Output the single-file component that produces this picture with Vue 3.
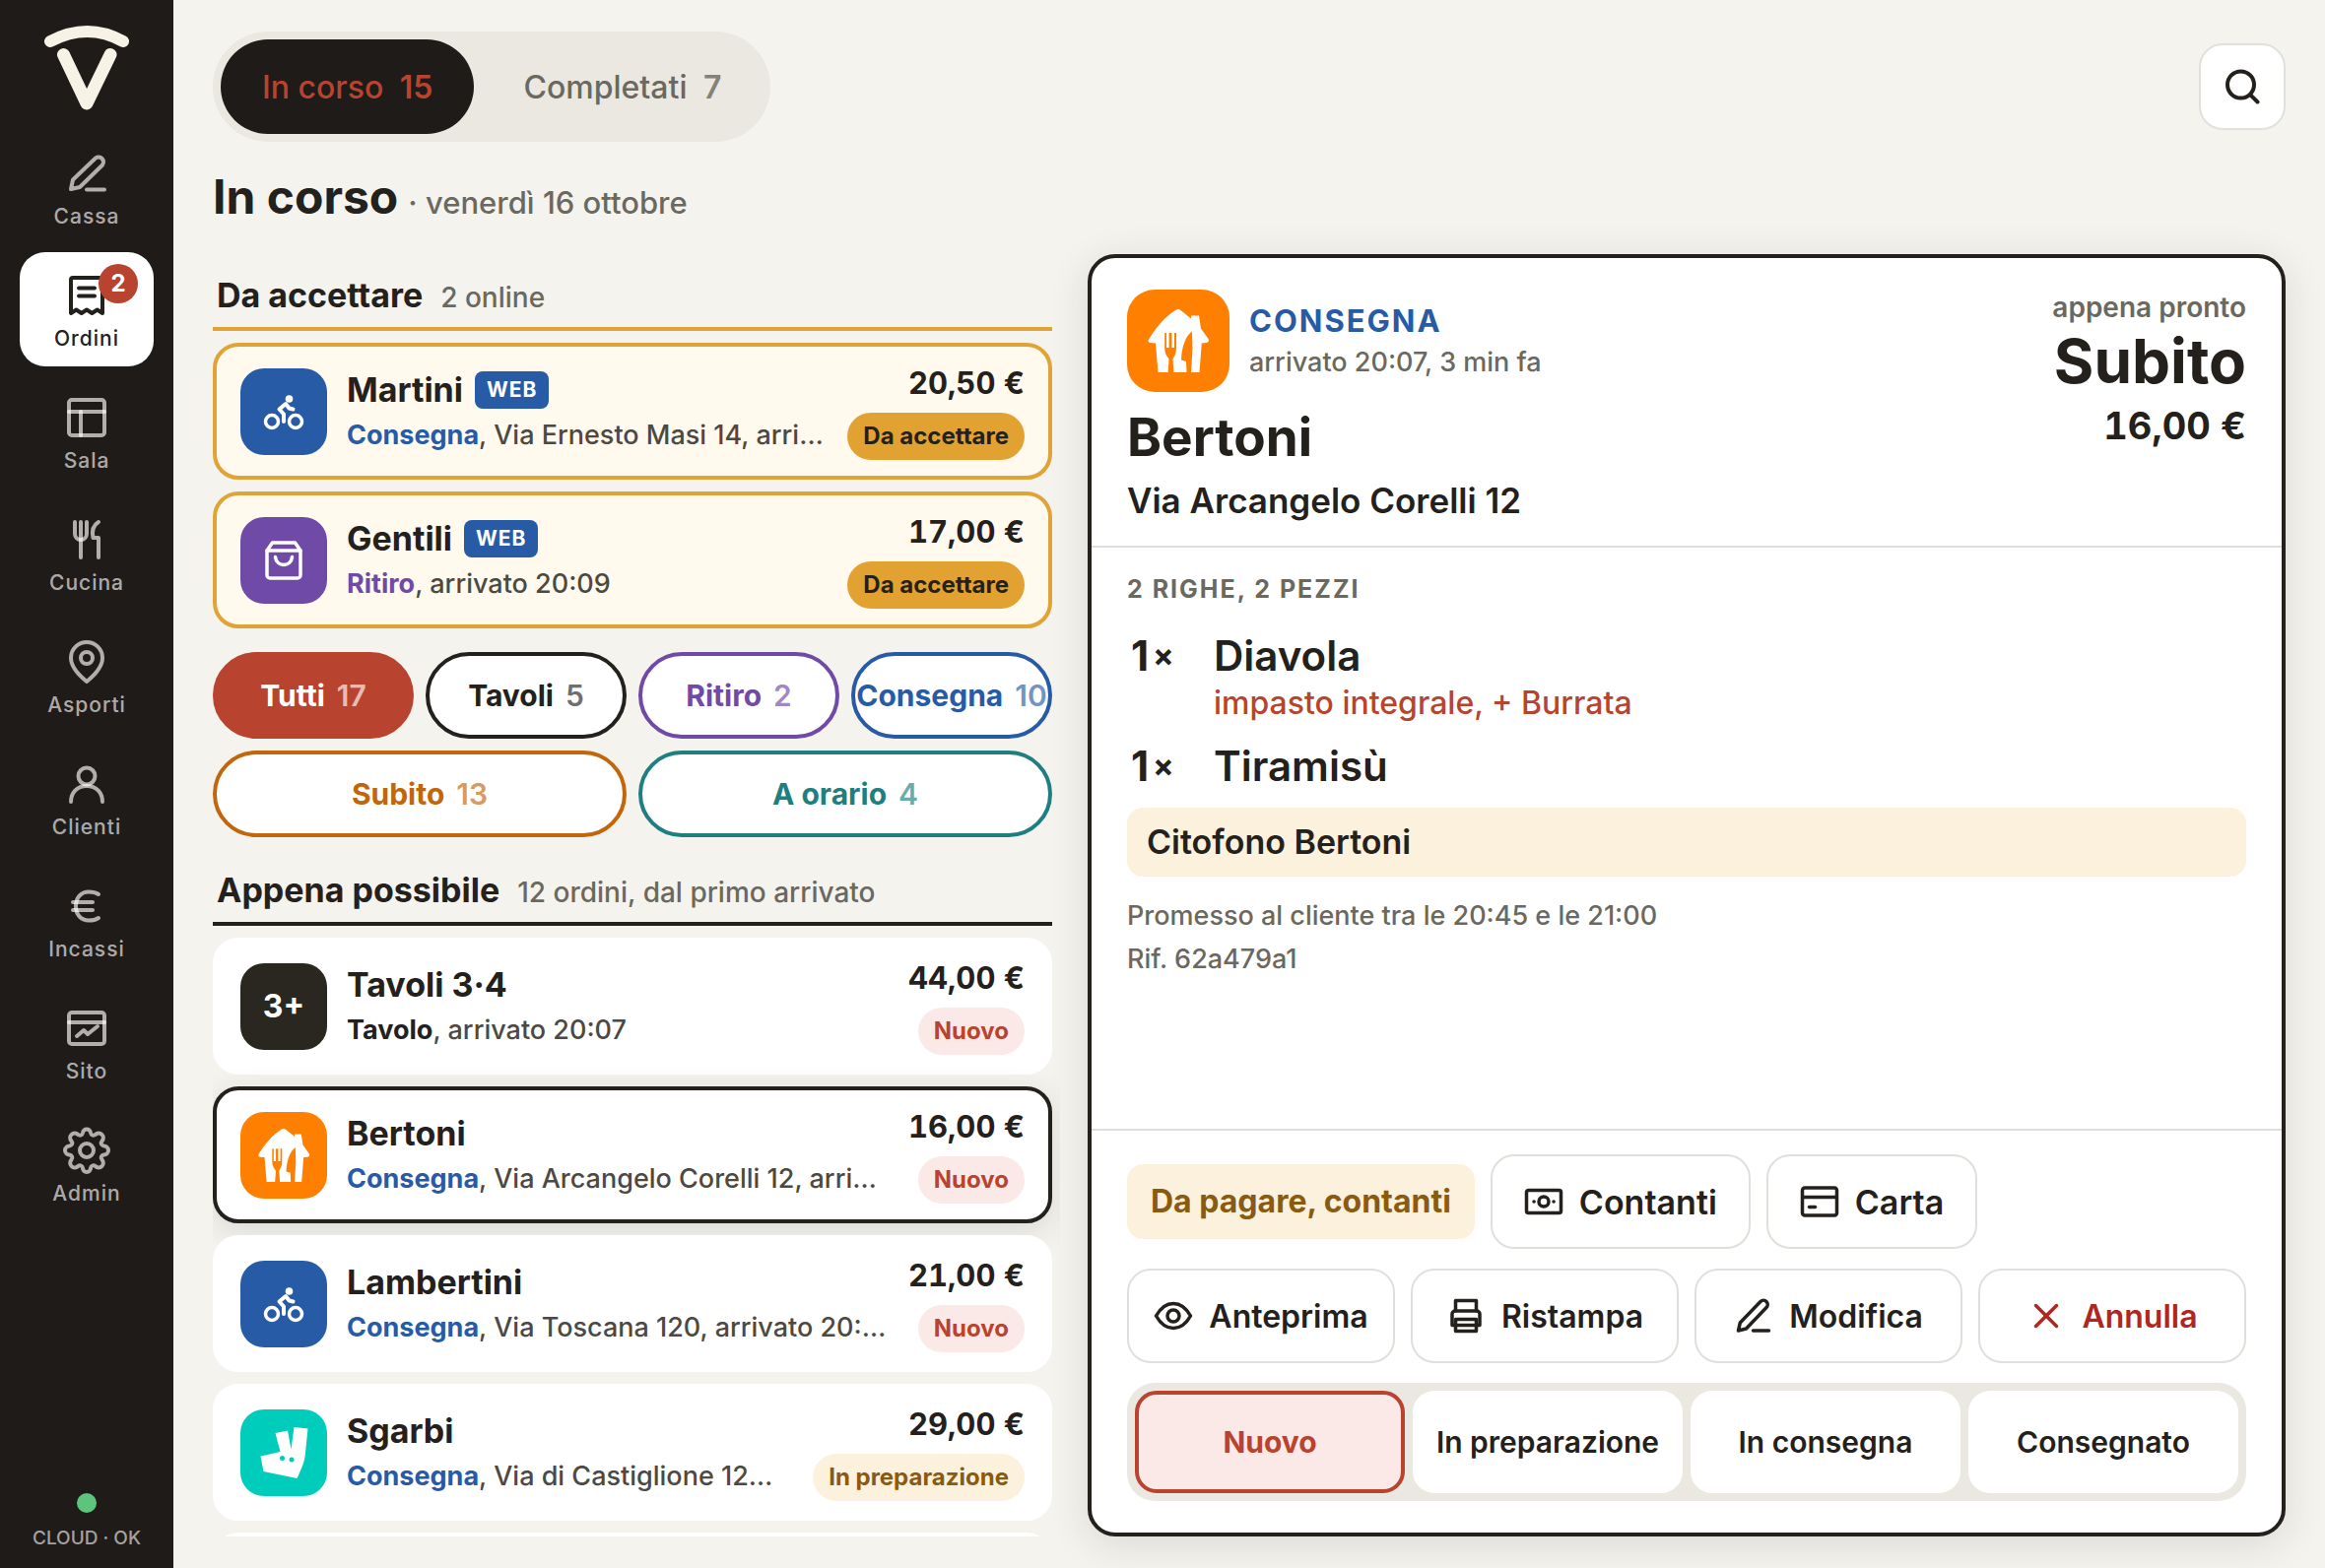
<script setup>
import { ref } from 'vue'

const nav = [
  { id: 'cassa', label: 'Cassa', paths: ['M8 40l2-9.500L33 8.500a5 5 0 0 1 7 7L17 38z', 'M24 40.500h18'] },
  { id: 'ordini', label: 'Ordini', badge: 2, paths: ['M8 42V8a2 2 0 0 1 2-2h28a2 2 0 0 1 2 2v34l-5.300-3.500-5.300 3.500-5.400-3.500-5.300 3.500-5.300-3.500z', 'M16 16.500h16', 'M16 24.500h16'] },
  { id: 'sala', label: 'Sala', paths: ['M9 6h30a3 3 0 0 1 3 3v30a3 3 0 0 1-3 3H9a3 3 0 0 1-3-3V9a3 3 0 0 1 3-3z', 'M6 18h36', 'M18 18v24'] },
  { id: 'cucina', label: 'Cucina', paths: ['M12 6v12a6 6 0 0 0 12 0V6', 'M18 6v36', 'M36 42V22h-5.500c-1.500-7 .5-13 5.500-16'] },
  { id: 'asporti', label: 'Asporti', paths: ['M24 44C13 35 8 28 8 20a16 16 0 0 1 32 0c0 8-5 15-16 24z', 'M24 14a6 6 0 1 1 0 12a6 6 0 0 1 0-12z'] },
  { id: 'clienti', label: 'Clienti', paths: ['M24 7.500a8.500 8.500 0 1 1 0 17a8.500 8.500 0 0 1 0-17z', 'M8 42c0-9 6-16 16-16s16 7 16 16'] },
  { id: 'incassi', label: 'Incassi', paths: ['M36 12c-3-2-7-2.500-10-2.500c-8 0-13 6-13 14.500s5 14.500 13 14.500c3 0 7-.5 10-2.500', 'M10 20h20', 'M10 28h20'] },
  { id: 'sito', label: 'Sito', paths: ['M9 8h30a3 3 0 0 1 3 3v26a3 3 0 0 1-3 3H9a3 3 0 0 1-3-3V11a3 3 0 0 1 3-3z', 'M6 18h36', 'M14 32l7-6 4 4 10-8'] },
  { id: 'admin', label: 'Admin', paths: ['M24 2.500a4 4 0 0 1 4 3.500c.4 2.500 2.800 3.500 4.800 2a4.500 4.500 0 0 1 6.700 6.500c-1.700 2-.7 4.600 2 5a4.500 4.500 0 0 1 0 9c-2.700.4-3.700 3-2 5a4.500 4.500 0 0 1-6.700 6.500c-2-1.500-4.400-.5-4.800 2a4 4 0 0 1-8 0c-.4-2.500-2.800-3.500-4.800-2a4.500 4.500 0 0 1-6.700-6.500c1.700-2 .7-4.600-2-5a4.500 4.500 0 0 1 0-9c2.700-.4 3.700-3 2-5A4.500 4.500 0 0 1 15.200 8c2 1.500 4.400.5 4.800-2a4 4 0 0 1 4-3.500z', 'M24 17a7 7 0 1 1 0 14a7 7 0 0 1 0-14z'] },
]

const pending = [
  { name: 'Martini', icon: 'bike', web: true, kind: 'Consegna', tone: 'blue', detail: 'Via Ernesto Masi 14, arri…', price: '20,50 €', status: 'Da accettare', state: 'accept' },
  { name: 'Gentili', icon: 'bag', web: true, kind: 'Ritiro', tone: 'purple', detail: 'arrivato 20:09', price: '17,00 €', status: 'Da accettare', state: 'accept' },
]

const orders = [
  { name: 'Tavoli 3·4', icon: 'table', kind: 'Tavolo', tone: 'ink', detail: 'arrivato 20:07', price: '44,00 €', status: 'Nuovo', state: 'new' },
  { name: 'Bertoni', icon: 'house', kind: 'Consegna', tone: 'blue', detail: 'Via Arcangelo Corelli 12, arri…', price: '16,00 €', status: 'Nuovo', state: 'new' },
  { name: 'Lambertini', icon: 'bike', kind: 'Consegna', tone: 'blue', detail: 'Via Toscana 120, arrivato 20:…', price: '21,00 €', status: 'Nuovo', state: 'new' },
  { name: 'Sgarbi', icon: 'roo', kind: 'Consegna', tone: 'blue', detail: 'Via di Castiglione 12…', price: '29,00 €', status: 'In preparazione', state: 'prep' },
  { name: '' },
]

const groups = [
  { id: 'pending', title: 'Da accettare', note: '2 online', items: pending },
  { id: 'asap', title: 'Appena possibile', note: '12 ordini, dal primo arrivato', items: orders },
]

const filters = [
  { label: 'Tutti', count: 17, tone: 'all' },
  { label: 'Tavoli', count: 5, tone: 'ink' },
  { label: 'Ritiro', count: 2, tone: 'purple' },
  { label: 'Consegna', count: 10, tone: 'blue' },
  { label: 'Subito', count: 13, tone: 'orange', wide: true },
  { label: 'A orario', count: 4, tone: 'teal', wide: true },
]

const lines = [
  { qty: 1, name: 'Diavola', extra: 'impasto integrale, + Burrata' },
  { qty: 1, name: 'Tiramisù' },
]

const payActions = [
  { label: 'Contanti', paths: ['M4.500 8.500h31a2 2 0 0 1 2 2v19a2 2 0 0 1-2 2h-31a2 2 0 0 1-2-2v-19a2 2 0 0 1 2-2z', 'M20 15a5 5 0 1 1 0 10a5 5 0 0 1 0-10z', 'M10 20h.1', 'M30 20h.1'] },
  { label: 'Carta', paths: ['M5 6h30a2.500 2.500 0 0 1 2.500 2.500v23A2.500 2.500 0 0 1 35 34H5a2.500 2.500 0 0 1-2.500-2.500v-23A2.500 2.500 0 0 1 5 6z', 'M3 15.500h34', 'M9.500 25.500h6'] },
]

const actions = [
  { label: 'Anteprima', paths: ['M2.500 20C7 12 13 7.500 20 7.500S33 12 37.500 20C33 28 27 32.500 20 32.500S7 28 2.500 20z', 'M20 14a6 6 0 1 1 0 12a6 6 0 0 1 0-12z'] },
  { label: 'Ristampa', paths: ['M9.500 15V4.500h21V15', 'M9.500 29.500H6V18a3 3 0 0 1 3-3h22a3 3 0 0 1 3 3v11.500h-3.500', 'M9.500 23.500h21v12h-21z', 'M9.500 29.500h21'] },
  { label: 'Modifica', paths: ['M4.500 35l1.800-8L27 5.500a4 4 0 0 1 6 6L12.500 33z', 'M19.500 35h16'] },
  { label: 'Annulla', danger: true, paths: ['M9.500 9.500l21 21', 'M30.500 9.500l-21 21'] },
]

const steps = ['Nuovo', 'In preparazione', 'In consegna', 'Consegnato']

const page = ref('ordini')
const tab = ref('open')
const selected = ref('Bertoni')
const filter = ref('Tutti')
const step = ref('Nuovo')
</script>

<template>
  <div class="app">
    <aside class="side">
      <svg class="logo" viewBox="0 0 88 88" aria-hidden="true">
        <path d="M7 18Q45 -2 81 18" />
        <path class="vee" d="M20.500 31.500L44 81L68 31.500" />
      </svg>
      <nav class="nav">
        <a v-for="n in nav" :key="n.id" href="#" class="nav-item" :class="{ active: page === n.id }" @click.prevent="page = n.id">
          <svg class="nav-icon" viewBox="0 0 48 48" aria-hidden="true">
            <path v-for="p in n.paths" :key="p" :d="p" />
          </svg>
          <span class="nav-label">{{ n.label }}</span>
          <span v-if="n.badge" class="nav-badge">{{ n.badge }}</span>
        </a>
      </nav>
      <div class="cloud"><span class="dot"></span>CLOUD · OK</div>
    </aside>

    <main class="main">
      <header class="top">
        <div class="tabs">
          <button type="button" class="tab" :class="{ active: tab === 'open' }" @click="tab = 'open'">In corso <b>15</b></button>
          <button type="button" class="tab" :class="{ active: tab === 'done' }" @click="tab = 'done'">Completati <b>7</b></button>
        </div>
        <button type="button" class="search" aria-label="Cerca">
          <svg viewBox="0 0 40 40" aria-hidden="true"><circle cx="18.500" cy="18" r="13.500" /><path d="M28.500 28.500L35.500 35.500" /></svg>
        </button>
      </header>

      <div class="heading">
        <h1>In corso</h1>
        <span>· venerdì 16 ottobre</span>
      </div>

      <div class="content">
        <section class="list">
          <template v-for="g in groups" :key="g.id">
            <div v-if="g.id === 'asap'" class="filters">
              <button v-for="f in filters" :key="f.label" type="button" class="filter" :class="[f.tone, { wide: f.wide }]" @click="filter = f.label">
                {{ f.label }} <span>{{ f.count }}</span>
              </button>
            </div>
            <div class="group-head" :class="g.id">
              <h2>{{ g.title }}</h2>
              <span>{{ g.note }}</span>
            </div>
            <article v-for="o in g.items" :key="o.name" class="card" :class="[g.id, { selected: selected === o.name }]" @click="selected = o.name">
              <template v-if="o.name">
                <div class="tile" :class="o.icon">
                  <template v-if="o.icon === 'table'">3+</template>
                  <svg v-else-if="o.icon === 'bike'" class="glyph" viewBox="0 0 48 48" aria-hidden="true">
                    <circle cx="12" cy="34" r="6.500" /><circle cx="36" cy="34" r="6.500" />
                    <circle class="solid" cx="29.500" cy="11" r="3.800" />
                    <path class="rider" d="M33.500 21.500L29.500 20.500L26 16L19.500 21.500L24 26.500V34" />
                  </svg>
                  <svg v-else-if="o.icon === 'bag'" class="glyph" viewBox="0 0 48 48" aria-hidden="true">
                    <path d="M7 14L12.500 6H35.500L41 14V39a3 3 0 0 1-3 3H10a3 3 0 0 1-3-3z" /><path d="M7 14H41" />
                    <path d="M15.500 20.500c1 10.500 16 10.500 17 0" />
                  </svg>
                  <svg v-else-if="o.icon === 'house'" class="full" viewBox="0 0 104 104" aria-hidden="true">
                    <use href="#house-mark" />
                  </svg>
                  <svg v-else class="full" viewBox="0 0 88 88" aria-hidden="true">
                    <path fill="#fff" d="M35.500 24L48 21.500L51.500 40.500L54.500 18L68.500 19.500L66 44C65.500 53 62 60 57.500 70L23.500 63L20.500 47.500L40.500 43z" />
                    <circle cx="42.500" cy="49.500" r="2.500" fill="#00ccbc" /><circle cx="52" cy="51" r="2.500" fill="#00ccbc" />
                  </svg>
                </div>
                <div class="who">
                  <div class="name">{{ o.name }}<span v-if="o.web" class="web">WEB</span></div>
                  <div class="detail"><b :class="o.tone">{{ o.kind }}</b>, {{ o.detail }}</div>
                </div>
                <div class="sum">
                  <div class="price">{{ o.price }}</div>
                  <div class="status" :class="o.state">{{ o.status }}</div>
                </div>
              </template>
            </article>
          </template>
        </section>

        <section class="panel">
          <header class="panel-head">
            <div>
              <div class="source">
                <svg class="source-icon" viewBox="0 0 104 104" aria-hidden="true">
                  <g id="house-mark">
                    <path fill="#fff" d="M49.500 20.800Q52 19 54.500 21L65 29.500V26.500H73L75 39.500L82.800 50.500Q83.500 53.500 80.500 54L75.800 54.500L73.500 84H31.500L29 54.500L23.500 54Q20.500 53 22 50.500C30 38 38 28 49.500 20.800z" />
                    <path fill="#ff8000" d="M66 42.500C59.500 47 55.500 58 55 71.500L60 73L60.500 85H65L66.500 60z" />
                    <path fill="#ff8000" d="M38.200 44h1.800v15h2.600V44h2.800v15h2.600V44h2v15c0 8-3 9-3.500 12l1 14h-6l1-14c-.6-3-4.300-4-4.300-12z" />
                  </g>
                </svg>
                <div>
                  <div class="mode">CONSEGNA</div>
                  <div class="muted arrived">arrivato 20:07, 3 min fa</div>
                </div>
              </div>
              <h2 class="customer">Bertoni</h2>
              <div class="address">Via Arcangelo Corelli 12</div>
            </div>
            <div class="when">
              <div class="muted strong">appena pronto</div>
              <div class="now">Subito</div>
              <div class="total">16,00 €</div>
            </div>
          </header>

          <div class="panel-body">
            <div class="count">2 RIGHE, 2 PEZZI</div>
            <div v-for="l in lines" :key="l.name" class="line">
              <div class="qty">{{ l.qty }}<small>×</small></div>
              <div>
                <div class="dish">{{ l.name }}</div>
                <div v-if="l.extra" class="extra">{{ l.extra }}</div>
              </div>
            </div>
            <div class="note">Citofono Bertoni</div>
            <div class="muted promise">Promesso al cliente tra le 20:45 e le 21:00<br />Rif. 62a479a1</div>
          </div>

          <footer class="panel-foot">
            <div class="pay">
              <span class="due">Da pagare, contanti</span>
              <button v-for="a in payActions" :key="a.label" type="button" class="btn">
                <svg viewBox="0 0 40 40" aria-hidden="true"><path v-for="p in a.paths" :key="p" :d="p" /></svg>{{ a.label }}
              </button>
            </div>
            <div class="actions">
              <button v-for="a in actions" :key="a.label" type="button" class="btn" :class="{ danger: a.danger }">
                <svg viewBox="0 0 40 40" aria-hidden="true"><path v-for="p in a.paths" :key="p" :d="p" /></svg>{{ a.label }}
              </button>
            </div>
            <div class="steps">
              <button v-for="s in steps" :key="s" type="button" class="step" :class="{ active: step === s }" @click="step = s">{{ s }}</button>
            </div>
          </footer>
        </section>
      </div>
    </main>
  </div>
</template>

<style>
body {
  background: #f4f3ee;
}
</style>

<style scoped>
* {
  box-sizing: border-box;
}
.app {
  display: flex;
  height: 100vh;
  overflow: hidden;
  font-family: Inter, "Open Sans", sans-serif;
  font-size: 28px;
  font-weight: 500;
  color: #24211d;
  background: #f4f3ee;
}
button {
  font: inherit;
  color: inherit;
  border: 0;
  margin: 0;
  padding: 0;
  background: none;
  white-space: nowrap;
  cursor: pointer;
}
h1, h2 {
  margin: 0;
}
svg {
  display: block;
  flex: none;
  fill: none;
  stroke-linecap: round;
  stroke-linejoin: round;
}

/* sidebar */
.side {
  width: 176px;
  flex: none;
  display: flex;
  flex-direction: column;
  align-items: center;
  padding: 24px 20px 18px;
  background: #1f1b18;
}
.logo {
  width: 88px;
  height: 88px;
  stroke: #f6f2e6;
  stroke-width: 12;
}
.logo .vee {
  stroke-width: 13;
}
.nav {
  width: 100%;
  margin-top: 20px;
  display: flex;
  flex-direction: column;
  gap: 8px;
}
.nav-item {
  position: relative;
  display: flex;
  flex-direction: column;
  align-items: center;
  gap: 6px;
  padding: 20px 0 14px;
  border-radius: 26px;
  color: rgba(255, 255, 255, 0.65);
  text-decoration: none;
}
.nav-item.active {
  background: #fff;
  color: #24211d;
}
.nav-icon {
  width: 48px;
  height: 48px;
  stroke: currentColor;
  stroke-width: 4;
}
.nav-label {
  font-size: 21px;
  line-height: 28px;
  letter-spacing: 1px;
}
.nav-badge {
  position: absolute;
  top: 12px;
  left: 80px;
  width: 40px;
  height: 40px;
  border-radius: 20px;
  background: #b8432f;
  color: #fff;
  font-size: 24px;
  font-weight: 700;
  line-height: 40px;
  text-align: center;
}
.cloud {
  margin-top: auto;
  display: flex;
  flex-direction: column;
  align-items: center;
  gap: 14px;
  font-size: 19px;
  line-height: 24px;
  white-space: nowrap;
  color: rgba(255, 255, 255, 0.6);
}
.dot {
  width: 20px;
  height: 20px;
  border-radius: 10px;
  background: #5cc47c;
}

/* top of the page */
.main {
  flex: 1;
  min-width: 0;
  display: flex;
  flex-direction: column;
  padding: 32px 40px;
}
.top {
  display: flex;
  align-items: center;
  justify-content: space-between;
}
.tabs {
  display: flex;
  gap: 8px;
  padding: 8px;
  border-radius: 56px;
  background: #eae8e0;
}
.tab {
  height: 96px;
  padding: 0 42px;
  border-radius: 48px;
  font-size: 32px;
  color: #6b6860;
}
.tab b {
  margin-left: 8px;
  font-weight: 600;
  opacity: 0.8;
}
.tab.active {
  background: #1f1b18;
  color: #b8432f;
}
.tab.active b {
  opacity: 1;
}
.search {
  width: 88px;
  height: 88px;
  display: grid;
  place-items: center;
  border: 2px solid #e2e0da;
  border-radius: 24px;
  background: #fff;
}
.search svg {
  width: 40px;
  height: 40px;
  stroke: #24211d;
  stroke-width: 4;
}
.heading {
  display: flex;
  align-items: baseline;
  gap: 10px;
  margin: 24px 0 20px;
  line-height: 64px;
}
.heading h1 {
  font-size: 48px;
  font-weight: 700;
}
.heading span {
  font-size: 31px;
  color: #6b6860;
}
.content {
  flex: 1;
  min-height: 0;
  display: flex;
  gap: 28px;
}

/* order list */
.list {
  flex: 0 0 860px;
  padding-right: 8px;
  display: flex;
  flex-direction: column;
  gap: 12px;
  overflow: hidden;
}
.group-head {
  flex: none;
  display: flex;
  align-items: baseline;
  gap: 18px;
  height: 78px;
  padding: 20px 4px 0;
  line-height: 44px;
  border-bottom: 4px solid #24211d;
  color: #6b6860;
}
.group-head h2 {
  font-size: 34px;
  font-weight: 700;
  color: #24211d;
}
.group-head.pending {
  border-color: #e0a336;
}
.card {
  flex: none;
  display: flex;
  align-items: center;
  gap: 20px;
  height: 139px;
  padding: 0 24px;
  border: 4px solid #fff;
  border-radius: 26px;
  background: #fff;
}
.card.pending {
  border-color: #e0a336;
  background: #fff9ee;
}
.card.selected {
  border-color: #24211d;
  box-shadow: 0 8px 32px rgba(36, 33, 29, 0.12);
}
.tile {
  width: 88px;
  height: 88px;
  flex: none;
  display: grid;
  place-items: center;
  border-radius: 24px;
  background: #2a2620;
  color: #fff;
  font-size: 32px;
  font-weight: 700;
}
.tile.bike {
  background: #285ba6;
}
.tile.bag {
  background: #6f4aa6;
}
.tile.house {
  background: #ff8000;
}
.tile.roo {
  background: #00ccbc;
}
.glyph {
  width: 48px;
  height: 48px;
  stroke: #fff;
  stroke-width: 3.500;
}
.glyph .solid {
  fill: #fff;
  stroke: none;
}
.glyph .rider {
  stroke-width: 4;
}
.full {
  width: 88px;
  height: 88px;
}
.who {
  flex: 1;
  min-width: 0;
}
.name {
  display: flex;
  align-items: center;
  gap: 12px;
  font-size: 34px;
  font-weight: 700;
  line-height: 48px;
}
.web {
  padding: 0 12px;
  border-radius: 8px;
  background: #285ba6;
  color: #fff;
  font-size: 21px;
  line-height: 38px;
  letter-spacing: 1px;
}
.detail {
  font-size: 27px;
  line-height: 44px;
  color: #4c4943;
  white-space: nowrap;
  overflow: hidden;
  text-overflow: ellipsis;
}
.detail b {
  font-weight: 700;
}
.detail .ink {
  color: #24211d;
}
.detail .blue {
  color: #285ba6;
}
.detail .purple {
  color: #6f4aa6;
}
.sum {
  flex: none;
  display: flex;
  flex-direction: column;
  align-items: flex-end;
  gap: 10px;
}
.price {
  font-size: 31px;
  font-weight: 700;
  line-height: 40px;
  font-variant-numeric: tabular-nums;
}
.status {
  padding: 0 16px;
  border-radius: 24px;
  font-size: 24px;
  font-weight: 700;
  line-height: 48px;
}
.status.accept {
  background: #e2a232;
}
.status.new {
  background: #fbe9e7;
  color: #b8432f;
}
.status.prep {
  background: #fcf1dc;
  color: #8a5a10;
}
.filters {
  flex: none;
  display: grid;
  grid-template-columns: repeat(4, minmax(0, 1fr));
  gap: 12px;
  padding: 12px 0 0;
}
.filter {
  height: 88px;
  display: flex;
  align-items: center;
  justify-content: center;
  gap: 12px;
  border: 4px solid currentColor;
  border-radius: 44px;
  background: #fff;
  font-size: 30px;
  font-weight: 700;
}
.filter span {
  font-weight: 600;
  opacity: 0.65;
}
.filter.wide {
  grid-column: span 2;
}
.filter.all {
  border-color: #b8432f;
  background: #b8432f;
  color: #fff;
}
.filter.purple {
  color: #6f4aa6;
}
.filter.blue {
  color: #285ba6;
}
.filter.orange {
  color: #c2660c;
}
.filter.teal {
  color: #1f7f80;
}

/* order detail */
.panel {
  flex: 1;
  min-width: 0;
  display: flex;
  flex-direction: column;
  border: 4px solid #24211d;
  border-radius: 28px;
  background: #fff;
  box-shadow: 0 8px 40px rgba(36, 33, 29, 0.12);
}
.muted {
  color: #6b6860;
  font-size: 27px;
}
.panel-head {
  display: flex;
  justify-content: space-between;
  padding: 32px 36px 20px;
  border-bottom: 2px solid #dfded8;
}
.source {
  display: flex;
  align-items: center;
  gap: 20px;
}
.source-icon {
  width: 104px;
  height: 104px;
  border-radius: 28px;
  background: #ff8000;
}
.mode {
  font-size: 31px;
  font-weight: 700;
  line-height: 44px;
  letter-spacing: 2px;
  color: #285ba6;
}
.arrived {
  line-height: 40px;
}
.customer {
  margin-top: 12px;
  font-size: 53px;
  font-weight: 700;
  line-height: 68px;
}
.address {
  margin-top: 4px;
  font-size: 35px;
  font-weight: 600;
  line-height: 52px;
}
.when {
  text-align: right;
}
.strong {
  font-size: 28px;
  font-weight: 600;
  line-height: 36px;
}
.now {
  font-size: 62px;
  font-weight: 700;
  line-height: 74px;
}
.total {
  font-size: 38px;
  font-weight: 700;
  line-height: 56px;
  font-variant-numeric: tabular-nums;
}
.panel-body {
  flex: 1;
  padding: 24px 36px;
}
.count {
  margin-bottom: 24px;
  font-size: 25px;
  font-weight: 700;
  line-height: 36px;
  letter-spacing: 2px;
  color: #6b6860;
}
.line {
  display: flex;
}
.line + .line {
  margin-top: 16px;
}
.qty {
  width: 88px;
  font-size: 42px;
  font-weight: 700;
  line-height: 52px;
  padding-left: 4px;
}
.qty small {
  margin-left: 4px;
  font-size: 32px;
  line-height: 32px;
  vertical-align: 4px;
}
.dish {
  font-size: 42px;
  font-weight: 600;
  line-height: 52px;
}
.extra {
  font-size: 32px;
  line-height: 44px;
  color: #b8432f;
}
.note {
  margin-top: 16px;
  padding: 0 20px;
  border-radius: 16px;
  background: #fcf1dc;
  font-size: 34px;
  font-weight: 600;
  line-height: 70px;
}
.promise {
  margin-top: 18px;
  line-height: 44px;
}
.panel-foot {
  display: flex;
  flex-direction: column;
  gap: 20px;
  padding: 24px 36px 32px;
  border-top: 2px solid #dfded8;
}
.pay {
  display: flex;
  align-items: center;
  gap: 16px;
}
.due {
  padding: 0 24px;
  border-radius: 16px;
  background: #fcf1dc;
  color: #8a5a10;
  font-size: 32px;
  font-weight: 700;
  line-height: 76px;
}
.btn {
  height: 96px;
  display: flex;
  align-items: center;
  justify-content: center;
  gap: 16px;
  padding: 0 32px;
  border: 2px solid #e0dfda;
  border-radius: 24px;
  background: #fff;
  font-size: 34px;
  font-weight: 600;
}
.btn svg {
  width: 40px;
  height: 40px;
  stroke: currentColor;
  stroke-width: 3.500;
}
.btn.danger {
  color: #b02620;
}
.actions {
  display: grid;
  grid-template-columns: repeat(4, minmax(0, 1fr));
  gap: 16px;
}
.actions .btn {
  padding: 0;
  font-size: 32px;
}
.steps {
  display: grid;
  grid-template-columns: repeat(4, minmax(0, 1fr));
  gap: 8px;
  padding: 8px;
  border-radius: 28px;
  background: #eae8e0;
}
.step {
  height: 104px;
  border-radius: 22px;
  background: #fff;
  font-size: 30px;
  font-weight: 600;
}
.step.active {
  border: 4px solid #b8432f;
  background: #fbe9e7;
  color: #b8432f;
  font-weight: 700;
}
</style>
